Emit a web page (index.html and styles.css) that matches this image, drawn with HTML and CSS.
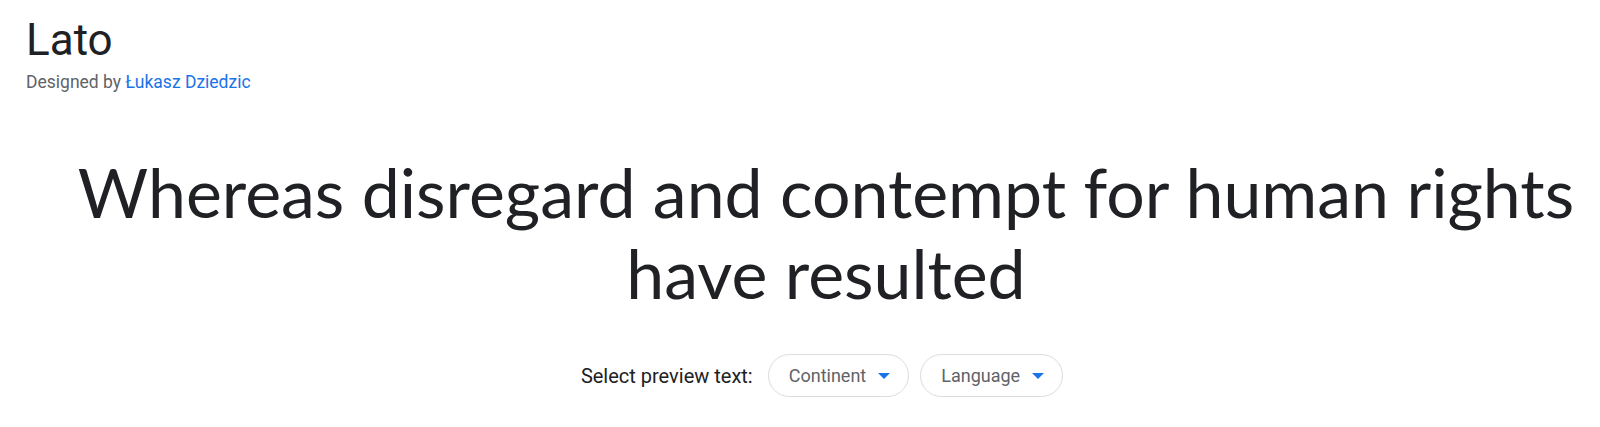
FILE: index.html
```html
<!DOCTYPE html>
<html>
<head>
	<meta charset="UTF-8">
	<title>Lato</title>
	<link rel="stylesheet" href="styles.css">
</head>
<body>
	<header class="family-header">
		<h1 class="family-name">Lato</h1>
		<p class="designer">Designed by <a href="#">Łukasz Dziedzic</a></p>
	</header>
	<div class="preview">
		<p class="preview-text">Whereas disregard and contempt for human rights have resulted</p>
	</div>
	<div class="preview-select">
		<span class="select-label">Select preview text:</span>
		<button type="button" class="pill">Continent <span class="caret"></span></button>
		<button type="button" class="pill">Language <span class="caret"></span></button>
	</div>
</body>
</html>
```
FILE: styles.css
```css
body {
	margin: 0;
	font-family: Roboto, "Liberation Sans", sans-serif;
	background-color: #fff;
	color: #202124;
}
.family-header {
	padding: 14px 0 0 26px;
}
.family-name {
	margin: 0;
	font-size: 44px;
	font-weight: 400;
	line-height: 52px;
	color: #202124;
}
.designer {
	margin: 5px 0 0;
	font-size: 17.5px;
	line-height: 22px;
	color: #5f6368;
}
.designer a {
	color: #1a73e8;
	text-decoration: none;
}
.preview {
	padding: 58px 0 0 52px;
	text-align: center;
}
.preview-text {
	margin: 0;
	font-family: Lato, sans-serif;
	font-size: 68px;
	line-height: 81px;
	color: #202124;
}
.preview-select {
	display: flex;
	align-items: center;
	justify-content: center;
	gap: 11px;
	padding: 41px 0 0 44px;
}
.select-label {
	font-size: 20px;
	color: #202124;
	margin-right: 4px;
}
.pill {
	display: flex;
	align-items: center;
	gap: 12px;
	height: 43px;
	padding: 0 18px 0 20px;
	border: 1px solid #dadce0;
	border-radius: 22px;
	background-color: #fff;
	font-family: Roboto, "Liberation Sans", sans-serif;
	font-size: 18px;
	color: #5f6368;
	cursor: pointer;
}
.caret {
	width: 0;
	height: 0;
	border-left: 6px solid transparent;
	border-right: 6px solid transparent;
	border-top: 6px solid #1a73e8;
}
```
